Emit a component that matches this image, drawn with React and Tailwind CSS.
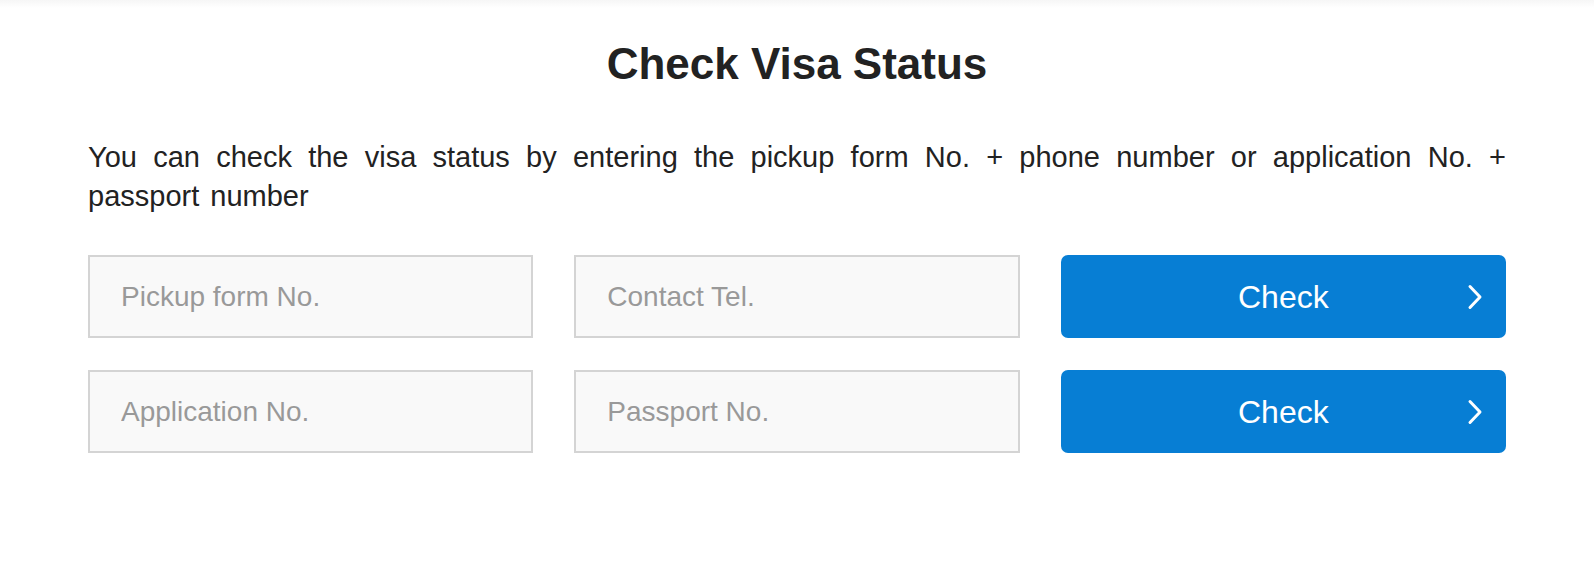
import React from 'react';

const rows = [
  { id: 'pickup', first: 'Pickup form No.', second: 'Contact Tel.' },
  { id: 'application', first: 'Application No.', second: 'Passport No.' },
];

function Chevron() {
  return (
    <svg width="16" height="26" viewBox="0 0 16 26" fill="none" className="shrink-0">
      <path d="M3 2.5 L13 13 L3 23.5" stroke="white" strokeWidth="3" strokeLinecap="round" strokeLinejoin="round" />
    </svg>
  );
}

export default function App() {
  return (
    <div className="min-h-[582px] bg-white font-['Liberation_Sans',Arial,sans-serif] text-[#222]">
      <div className="h-2 bg-gradient-to-b from-[#f6f6f6] to-white" />
      <div className="px-[88px]">
        <h1 className="mt-[28px] text-center text-[44px] font-bold leading-[56px] text-[#222]">
          Check Visa Status
        </h1>

        <p className="mt-[46px] text-justify text-[29px] leading-[39px] [word-spacing:3px]">
          You can check the visa status by entering the pickup form No. + phone number or application No. + passport number
        </p>

        <div className="mt-[39px] flex flex-col gap-[32px]">
          {rows.map(row => (
            <div key={row.id} className="grid grid-cols-3 gap-[41px]">
              <input
                type="text"
                placeholder={row.first}
                className="h-[83px] w-full border-2 border-[#d4d4d4] bg-[#f9f9f9] px-[31px] text-[28px] text-[#333] outline-none placeholder:text-[#999]"
              />
              <input
                type="text"
                placeholder={row.second}
                className="h-[83px] w-full border-2 border-[#d4d4d4] bg-[#f9f9f9] px-[31px] text-[28px] text-[#333] outline-none placeholder:text-[#999]"
              />
              <button className="relative flex h-[83px] w-full items-center justify-center rounded-[7px] bg-[#077ed4] text-[32px] text-white">
                <span>Check</span>
                <span className="absolute right-[23px] top-1/2 -translate-y-1/2">
                  <Chevron />
                </span>
              </button>
            </div>
          ))}
        </div>
      </div>
    </div>
  );
}
